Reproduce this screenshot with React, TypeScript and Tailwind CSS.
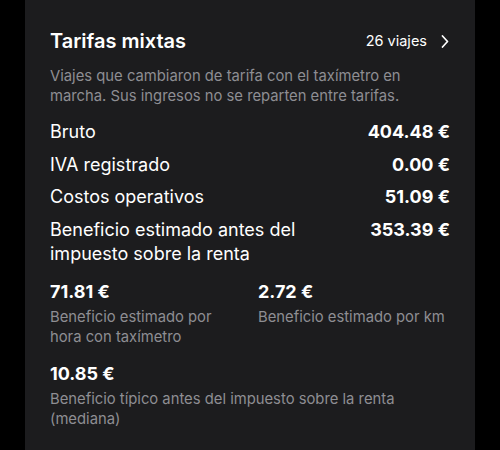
import React from "react";

const font = { fontFamily: "Inter, 'Noto Sans', sans-serif" };

function Row({ label, value }: { label: React.ReactNode; value: string }) {
  return (
    <div className="flex justify-between items-start gap-4 text-[18px] leading-[24.5px] py-[4px]">
      <div className="text-white">{label}</div>
      <div className="text-white font-bold whitespace-nowrap">{value}</div>
    </div>
  );
}

function Stat({ value, label }: { value: string; label: React.ReactNode }) {
  return (
    <div>
      <div className="text-white font-bold text-[18px] leading-[24px]">{value}</div>
      <div className="text-[#8e8e93] text-[14.8px] leading-[20px] mt-[3px]">{label}</div>
    </div>
  );
}

export default function App() {
  return (
    <div className="w-[500px] h-[450px] bg-black overflow-hidden" style={font}>
      <div className="mx-[25px] h-full bg-[#1c1c1e] px-[25px] pt-[27px]">
        <div className="flex items-center justify-between">
          <div className="text-white text-[20px] font-semibold leading-[28px]">Tarifas mixtas</div>
          <div className="flex items-center gap-[14px] text-white text-[14.5px] pr-[1px]">
            <span>26 viajes</span>
            <svg width="8" height="13" viewBox="0 0 8 13" fill="none">
              <path d="M1.5 1L6.5 6.5L1.5 12" stroke="white" strokeWidth="1.7" strokeLinecap="round" strokeLinejoin="round" />
            </svg>
          </div>
        </div>
        <div className="mt-[11px] text-[#8e8e93] text-[14.8px] leading-[20px]">
          Viajes que cambiaron de tarifa con el taxímetro en
          <br />
          marcha. Sus ingresos no se reparten entre tarifas.
        </div>
        <div className="mt-[10px]">
          <Row label="Bruto" value="404.48 €" />
          <Row label="IVA registrado" value="0.00 €" />
          <Row label="Costos operativos" value="51.09 €" />
          <Row
            label={
              <>
                Beneficio estimado antes del
                <br />
                impuesto sobre la renta
              </>
            }
            value="353.39 €"
          />
        </div>
        <div className="mt-[9px] grid grid-cols-2 gap-x-4">
          <Stat
            value="71.81 €"
            label={
              <>
                Beneficio estimado por
                <br />
                hora con taxímetro
              </>
            }
          />
          <Stat value="2.72 €" label="Beneficio estimado por km" />
        </div>
        <div className="mt-[15px]">
          <Stat
            value="10.85 €"
            label={
              <>
                Beneficio típico antes del impuesto sobre la renta
                <br />
                (mediana)
              </>
            }
          />
        </div>
      </div>
    </div>
  );
}
